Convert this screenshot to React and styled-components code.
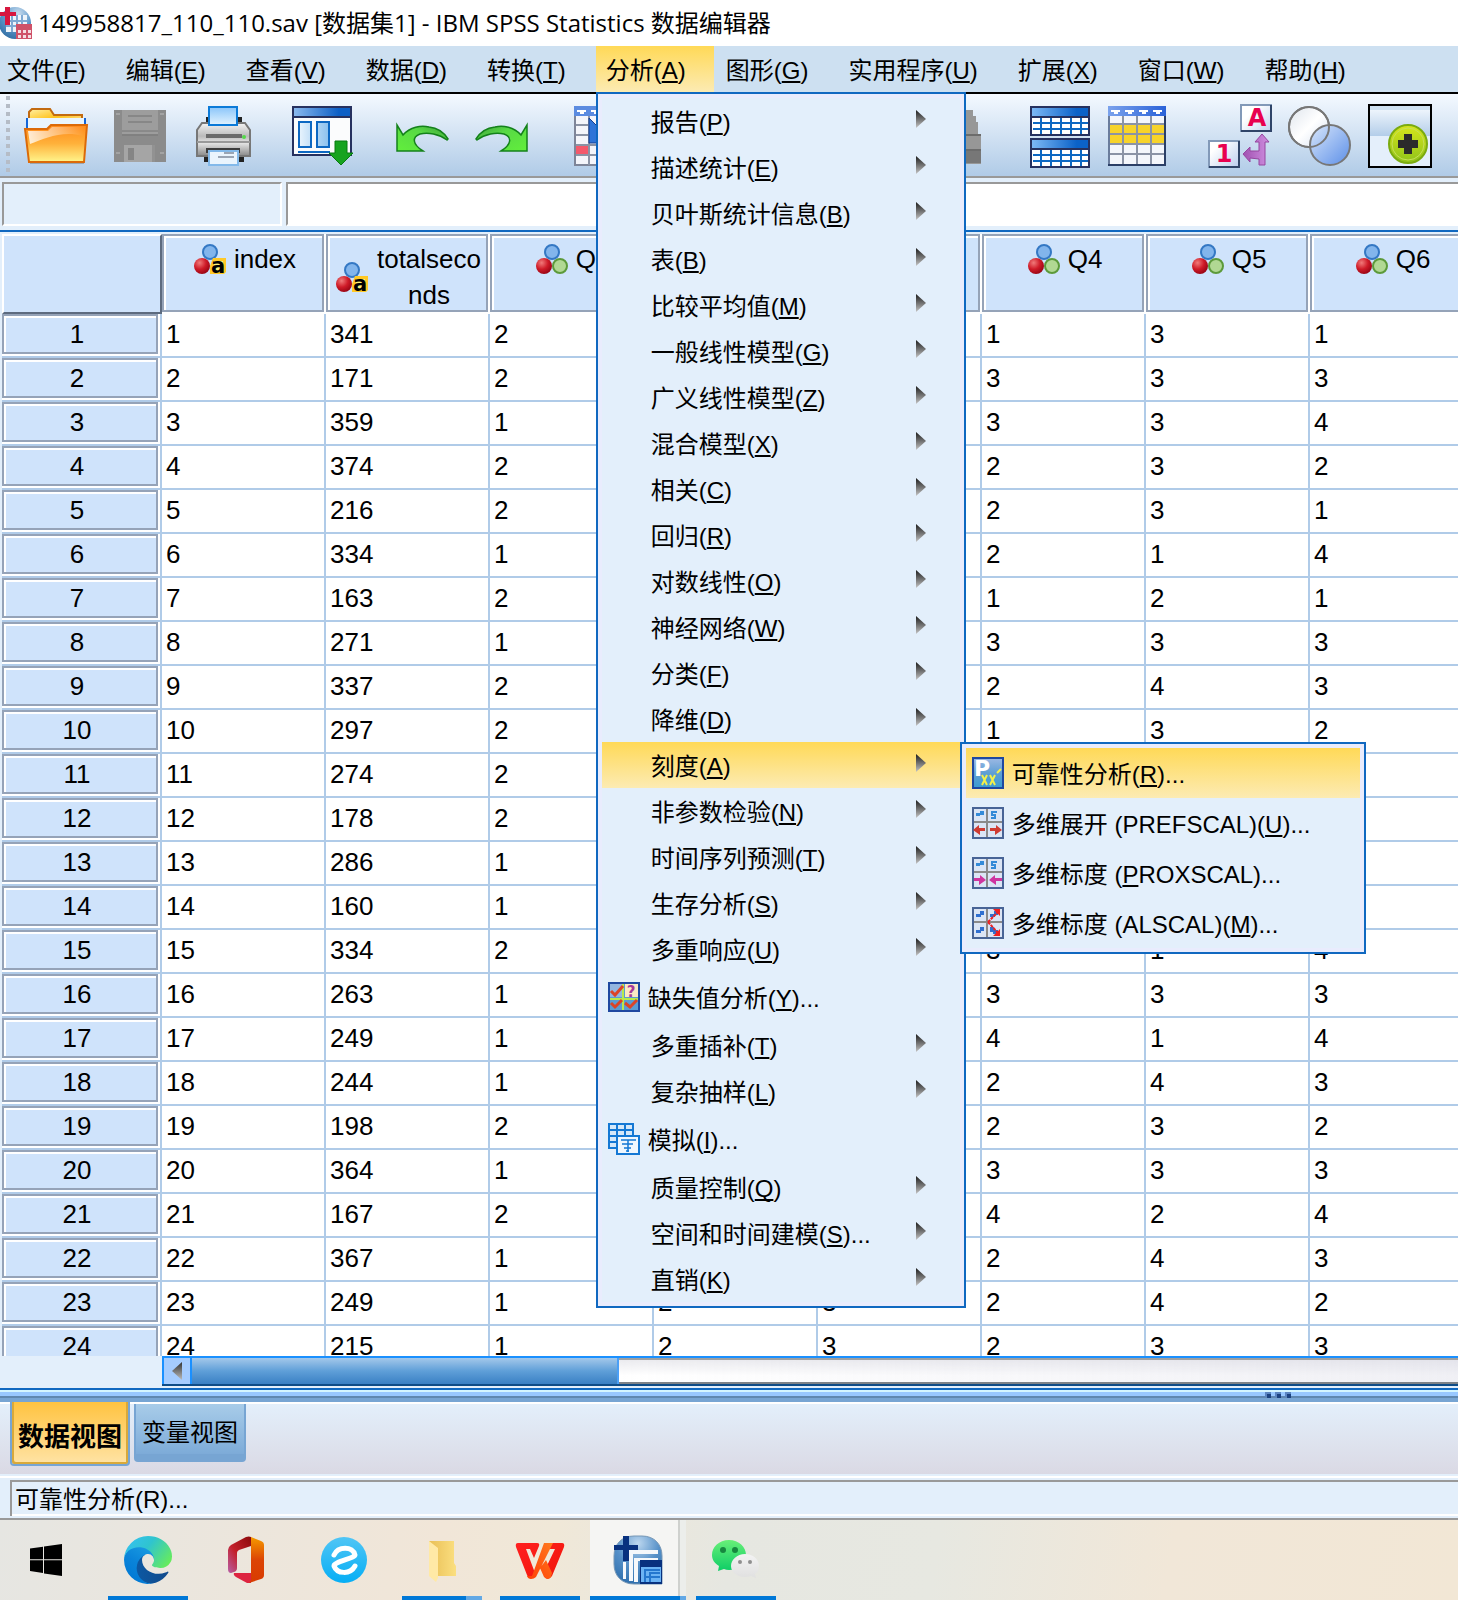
import { useState } from 'react';
import styled, { createGlobalStyle, css } from 'styled-components';

const sans = '"Liberation Sans", "Noto Sans CJK SC", sans-serif';

const GlobalStyle = createGlobalStyle`
    * { box-sizing: border-box; }
    body { margin: 0; background: #e3effb; font-family: ${sans}; color: #000; }
    button, input { font: inherit; color: inherit; }
    button { border: 0; padding: 0; background: none; text-align: left; }
    ul { list-style: none; margin: 0; padding: 0; }
    svg { display: block; flex: none; overflow: visible; }
    u { text-decoration-thickness: 2px; text-underline-offset: 2px; text-decoration-skip-ink: none; }
`

const menus = [
    ['文件', 'F'], ['编辑', 'E'], ['查看', 'V'], ['数据', 'D'], ['转换', 'T'], ['分析', 'A'],
    ['图形', 'G'], ['实用程序', 'U'], ['扩展', 'X'], ['窗口', 'W'], ['帮助', 'H']
];

const scaleItems = [
    { icon: <ReliabilityIcon />, label: '可靠性分析', letter: 'R', dots: true },
    { icon: <ScalingIcon type="unfold" />, label: '多维展开 (PREFSCAL)', letter: 'U', dots: true },
    { icon: <ScalingIcon type="prox" />, text: <>多维标度 (<u>P</u>ROXSCAL)...</> },
    { icon: <ScalingIcon type="alscal" />, label: '多维标度 (ALSCAL)', letter: 'M', dots: true }
];

const analyzeItems = [
    { label: '报告', letter: 'P', more: true },
    { label: '描述统计', letter: 'E', more: true },
    { label: '贝叶斯统计信息', letter: 'B', more: true },
    { label: '表', letter: 'B', more: true },
    { label: '比较平均值', letter: 'M', more: true },
    { label: '一般线性模型', letter: 'G', more: true },
    { label: '广义线性模型', letter: 'Z', more: true },
    { label: '混合模型', letter: 'X', more: true },
    { label: '相关', letter: 'C', more: true },
    { label: '回归', letter: 'R', more: true },
    { label: '对数线性', letter: 'O', more: true },
    { label: '神经网络', letter: 'W', more: true },
    { label: '分类', letter: 'F', more: true },
    { label: '降维', letter: 'D', more: true },
    { label: '刻度', letter: 'A', more: true, items: scaleItems },
    { label: '非参数检验', letter: 'N', more: true },
    { label: '时间序列预测', letter: 'T', more: true },
    { label: '生存分析', letter: 'S', more: true },
    { label: '多重响应', letter: 'U', more: true },
    { icon: <MissingIcon />, label: '缺失值分析', letter: 'Y', dots: true },
    { label: '多重插补', letter: 'T', more: true },
    { label: '复杂抽样', letter: 'L', more: true },
    { icon: <SimulationIcon />, label: '模拟', letter: 'I', dots: true },
    { label: '质量控制', letter: 'Q', more: true },
    { label: '空间和时间建模', letter: 'S', dots: true, more: true },
    { label: '直销', letter: 'K', more: true }
];

const columns = ['index', 'totalseconds', 'Q1', 'Q2', 'Q3', 'Q4', 'Q5', 'Q6'];

// totalseconds, Q1 ... Q6
const rows = [
    [341, 2, '', '', 1, 3, 1],
    [171, 2, '', '', 3, 3, 3],
    [359, 1, '', '', 3, 3, 4],
    [374, 2, '', '', 2, 3, 2],
    [216, 2, '', '', 2, 3, 1],
    [334, 1, '', '', 2, 1, 4],
    [163, 2, '', '', 1, 2, 1],
    [271, 1, '', '', 3, 3, 3],
    [337, 2, '', '', 2, 4, 3],
    [297, 2, '', '', 1, 3, 2],
    [274, 2, '', '', '', '', ''],
    [178, 2, '', '', '', '', ''],
    [286, 1, '', '', '', '', ''],
    [160, 1, '', '', '', '', ''],
    [334, 2, '', '', 3, 1, 4],
    [263, 1, '', '', 3, 3, 3],
    [249, 1, '', '', 4, 1, 4],
    [244, 1, '', '', 2, 4, 3],
    [198, 2, '', '', 2, 3, 2],
    [364, 1, '', '', 3, 3, 3],
    [167, 2, '', '', 4, 2, 4],
    [367, 1, '', '', 2, 4, 3],
    [249, 1, 2, 3, 2, 4, 2],
    [215, 1, 2, 3, 2, 3, 3]
];

function App(){
    const [open, setOpen] = useState('分析');
    const [view, setView] = useState('data');

    return(
        <Window>
            <GlobalStyle />
            <TitleBar>
                <AppIcon />
                <Title>149958817_110_110.sav [数据集1] - IBM SPSS Statistics 数据编辑器</Title>
            </TitleBar>
            <MenuBar>
                {menus.map(([label, letter]) => (
                    <MenuEntry key={label}>
                        <MenuButton type="button" $active={open === label} onClick={() => setOpen(label)}>
                            <span>{label}(<u>{letter}</u>)</span>
                        </MenuButton>
                        {label === '分析' && open === label && <Menu items={analyzeItems} />}
                    </MenuEntry>
                ))}
            </MenuBar>
            <Toolbar />
            <CellBar>
                <CellName type="text" aria-label="单元格" readOnly />
                <CellValue type="text" aria-label="值" />
            </CellBar>
            <DataGrid />
            <ScrollBar />
            <Splitter><SplitDots /></Splitter>
            <Tabs>
                <Tab type="button" $active={view === 'data'} onClick={() => setView('data')}>数据视图</Tab>
                <Tab type="button" $active={view === 'variable'} onClick={() => setView('variable')}>变量视图</Tab>
            </Tabs>
            <StatusBar><StatusText>可靠性分析(R)...</StatusText></StatusBar>
            <TaskBar />
        </Window>
    )
}

function Menu({ items, sub }){
    return(
        <Popup $sub={sub}>
            {items.map((item, i) => (
                <MenuRow key={i}>
                    <MenuItem type="button" $icon={!!item.icon} $active={!!item.items || (sub && i === 0)}>
                        {item.icon}
                        <MenuText>
                            {item.text || <>{item.label}(<u>{item.letter}</u>){item.dots && '...'}</>}
                        </MenuText>
                        {item.more && <MoreArrow />}
                    </MenuItem>
                    {item.items && <Menu items={item.items} sub />}
                </MenuRow>
            ))}
        </Popup>
    )
}

function DataGrid(){
    return(
        <GridArea>
            <Table>
                <colgroup>
                    <NumberCol />
                    {columns.map(name => <DataCol key={name} />)}
                </colgroup>
                <thead>
                    <tr>
                        <HeadCell><Corner /></HeadCell>
                        {columns.map((name, i) => (
                            <HeadCell key={name} scope="col">
                                <HeadBox>
                                    <HeadLabel>
                                        <NominalIcon string={i < 2} />
                                        <HeadName>{name}</HeadName>
                                    </HeadLabel>
                                </HeadBox>
                            </HeadCell>
                        ))}
                    </tr>
                </thead>
                <tbody>
                    {rows.map((row, i) => (
                        <tr key={i}>
                            <NumberCell scope="row"><NumberBox>{i + 1}</NumberBox></NumberCell>
                            <Cell>{i + 1}</Cell>
                            {row.map((value, j) => <Cell key={j}>{value}</Cell>)}
                        </tr>
                    ))}
                </tbody>
            </Table>
        </GridArea>
    )
}

function ScrollBar(){
    return(
        <ScrollRow>
            <ScrollTrack>
                <ScrollButton type="button" aria-label="向左滚动">
                    <svg width="10" height="18" viewBox="0 0 10 18">
                        <defs>
                            <linearGradient id="sl" x1="0" y1="0" x2="0" y2="1"><stop stopColor="#333" /><stop offset="1" stopColor="#bbb" /></linearGradient>
                        </defs>
                        <path d="M10 0v18L0 9z" fill="url(#sl)" />
                    </svg>
                </ScrollButton>
                <ScrollThumb />
                <ScrollRest />
            </ScrollTrack>
        </ScrollRow>
    )
}

function Toolbar(){
    return(
        <Tools>
            <Grip />
            <ToolGroup $gap={20} $before={14}>
                <Tool type="button" aria-label="打开"><FolderIcon /></Tool>
                <Tool type="button" aria-label="保存"><SaveIcon /></Tool>
                <Tool type="button" aria-label="打印"><PrintIcon /></Tool>
            </ToolGroup>
            <ToolGroup $before={34}>
                <Tool type="button" aria-label="重新调用对话框"><RecallIcon /></Tool>
            </ToolGroup>
            <ToolGroup $gap={16} $before={36}>
                <Tool type="button" aria-label="撤消"><UndoIcon /></Tool>
                <Tool type="button" aria-label="重做"><UndoIcon flip /></Tool>
            </ToolGroup>
            <ToolGroup $gap={16} $before={38}>
                <Tool type="button" aria-label="转到个案"><CaseIcon /></Tool>
                <Tool type="button" aria-label="转到变量"><CaseIcon /></Tool>
                <Tool type="button" aria-label="变量"><CaseIcon /></Tool>
                <Tool type="button" aria-label="描述统计"><CaseIcon /></Tool>
            </ToolGroup>
            <ToolGroup $before={46}>
                <Tool type="button" aria-label="查找"><FindIcon /></Tool>
            </ToolGroup>
            <ToolGroup $gap={14} $before={42}>
                <Tool type="button" aria-label="拆分文件"><SplitIcon /></Tool>
                <Tool type="button" aria-label="选择个案"><SelectIcon /></Tool>
            </ToolGroup>
            <ToolGroup $gap={16} $before={38}>
                <Tool type="button" aria-label="值标签"><LabelsIcon /></Tool>
                <Tool type="button" aria-label="使用变量集"><SetsIcon /></Tool>
                <Tool type="button" aria-label="定制工具栏"><CustomIcon /></Tool>
            </ToolGroup>
        </Tools>
    )
}

function TaskBar(){
    return(
        <Tasks>
            <StartButton type="button" aria-label="开始"><WindowsIcon /></StartButton>
            <Task icon={<EdgeIcon />} name="Edge" running />
            <Task icon={<OfficeIcon />} name="Office" />
            <Task icon={<BrowserIcon />} name="浏览器" />
            <Task icon={<ExplorerIcon />} name="文件资源管理器" running stacked={16} />
            <Task icon={<WpsIcon />} name="WPS" running />
            <Task icon={<SpssIcon />} name="SPSS" running stacked={6} active />
            <Task icon={<WeChatIcon />} name="微信" running />
        </Tasks>
    )
}

function Task({ icon, name, running, stacked = 0, active }){
    return(
        <TaskButton type="button" aria-label={name} $active={active}>
            <TaskFace $active={active}>{icon}</TaskFace>
            <TaskLine $running={running} $stacked={stacked} />
        </TaskButton>
    )
}

/* icons */

function AppIcon(){
    return(
        <svg width="32" height="32" viewBox="0 0 32 32">
            <defs>
                <radialGradient id="ai" cx=".6" cy=".2" r=".9"><stop stopColor="#c9dcee" /><stop offset=".5" stopColor="#5e98ca" /><stop offset="1" stopColor="#2b689f" /></radialGradient>
            </defs>
            <circle cx="15" cy="16" r="16" fill="url(#ai)" />
            <path d="M6 8h21v17H6z" fill="#eef4fa" />
            <path d="M6 14h21M6 19h21M12 8v17M17 8v17M22 8v17" stroke="#7fa9d3" strokeWidth="2" />
            <path d="M16 17h16v15H16z" fill="#cf5269" />
            <path d="M18 23h3v3h-3zM23 23h3v3h-3zM28 23h3v3h-3zM18 28h3v3h-3zM23 28h3v3h-3zM28 28h3v3h-3z" fill="#f4dde2" />
            <path d="M5 0h5v5h6v4h-6v9H5V9H0V5h5z" fill="#d7173f" />
        </svg>
    )
}

function MoreArrow(){
    return(
        <svg width="10" height="22" viewBox="0 0 10 22">
            <defs>
                <linearGradient id="ma" x1="0" y1="0" x2="0" y2="1"><stop stopColor="#1c1c1c" /><stop offset="1" stopColor="#c4c4c4" /></linearGradient>
            </defs>
            <path d="M0 0l10 9L0 18z" fill="url(#ma)" />
        </svg>
    )
}

function NominalIcon({ string }){
    return(
        <svg width="32" height="30" viewBox="0 0 32 30">
            <defs>
                <radialGradient id="nr" cx=".35" cy=".3" r=".8"><stop stopColor="#f07a7a" /><stop offset=".5" stopColor="#cf1b28" /><stop offset="1" stopColor="#8d0010" /></radialGradient>
            </defs>
            <circle cx="16" cy="8" r="7" fill="#82b5ec" stroke="#3478c4" strokeWidth="2" />
            <circle cx="8" cy="22" r="8" fill="url(#nr)" />
            {string
                ? <>
                    <path d="M19 14h13v14l-2 2H16v-8z" fill="#ffc926" />
                    <path d="M20 17h9v11h-9z" fill="#fff27a" />
                    <text x="24" y="29" textAnchor="middle" fontFamily="DejaVu Sans" fontWeight="700" fontSize="21">a</text>
                </>
                : <circle cx="24" cy="22" r="7" fill="#b1d893" stroke="#5c9a3a" strokeWidth="2" />}
        </svg>
    )
}

function FolderIcon(){
    return(
        <svg width="64" height="64" viewBox="0 0 64 64">
            <defs>
                <linearGradient id="fo1" x1="0" y1="0" x2="1" y2="1"><stop stopColor="#fff1a6" /><stop offset=".5" stopColor="#ffc21b" /><stop offset="1" stopColor="#ffe9b0" /></linearGradient>
                <linearGradient id="fo2" x1="0" y1="0" x2="0" y2="1"><stop stopColor="#ff8a1c" /><stop offset=".5" stopColor="#ffb13a" /><stop offset="1" stopColor="#fff58c" /></linearGradient>
                <linearGradient id="fo3" x1="0" y1="0" x2="1" y2="0"><stop stopColor="#fff" stopOpacity=".8" /><stop offset="1" stopColor="#fff" stopOpacity="0" /></linearGradient>
            </defs>
            <path d="M6 59h54v1H6z" fill="#777" opacity=".5" />
            <path d="M5 17V8l3-3h18l4 6h28v10H5z" fill="url(#fo1)" stroke="#c26a10" strokeWidth="2" />
            <path d="M3 14h58v14H3z" fill="#eaf5fd" />
            <path d="M3 14v12M61 14v10" stroke="#1465d8" strokeWidth="2" />
            <path d="M1 25h22l4-4h36l-3 37H5z" fill="url(#fo2)" stroke="#dc6a08" strokeWidth="2" />
            <path d="M4 27h20l4-4h32l-1 9C40 26 20 34 6 40z" fill="url(#fo3)" />
        </svg>
    )
}

function SaveIcon(){
    return(
        <svg width="64" height="64" viewBox="0 0 64 64">
            <path d="M6 6h52v52H6z" fill="#8b8b8b" />
            <path d="M14 6h36v24H14z" fill="#9d9d9d" />
            <path d="M20 12h24M20 18h24" stroke="#878787" strokeWidth="2" />
            <path d="M14 27h36M14 31h36" stroke="#777" strokeWidth="1" />
            <path d="M16 41h31v17H16z" fill="#a5a5a5" />
            <path d="M20 44h6v12h-6z" fill="#858585" />
            <path d="M44 41h3v17h-3z" fill="#929292" />
            <path d="M8 10h4M52 10h4M8 49h4M52 49h4" stroke="#a3a3a3" strokeWidth="2" />
        </svg>
    )
}

function PrintIcon(){
    return(
        <svg width="64" height="64" viewBox="0 0 64 64">
            <defs>
                <linearGradient id="pr1" x1="0" y1="0" x2="0" y2="1"><stop stopColor="#8ac5fa" /><stop offset="1" stopColor="#e2f3fe" /></linearGradient>
                <linearGradient id="pr2" x1="0" y1="0" x2="0" y2="1"><stop stopColor="#f4f4f4" /><stop offset=".4" stopColor="#bababa" /><stop offset=".6" stopColor="#e6e6e6" /><stop offset="1" stopColor="#888" /></linearGradient>
            </defs>
            <path d="M14 13h36v10H14zM12 52h40v6H12z" fill="#222" />
            <path d="M5 26l5-7h43l5 7v26H5z" fill="url(#pr2)" stroke="#777" strokeWidth="2" />
            <path d="M17 3h28v18H17z" fill="url(#pr1)" stroke="#0b7ad8" strokeWidth="2" />
            <path d="M14 30h36v4H14z" fill="#6a6a6a" />
            <path d="M5 38h53" stroke="#999" strokeWidth="2" />
            <circle cx="52" cy="33" r="2" fill="#54d84a" />
            <path d="M14 44h34v5H14z" fill="#3d3d3d" />
            <path d="M17 47h29v14H17z" fill="#eaf4fd" stroke="#83b9ea" strokeWidth="2" />
            <path d="M32 49h10M26 53h16" stroke="#9aa5b4" strokeWidth="2" />
        </svg>
    )
}

function RecallIcon(){
    return(
        <svg width="64" height="64" viewBox="0 0 64 64">
            <defs>
                <linearGradient id="re1" x1="0" x2="1"><stop stopColor="#8ab9ee" /><stop offset=".8" stopColor="#0c5fc6" /></linearGradient>
                <linearGradient id="re2" x1="0" x2="1"><stop stopColor="#e9f4fd" /><stop offset="1" stopColor="#8bc1ee" /></linearGradient>
            </defs>
            <path d="M3 3h58v48H3z" fill="#fbfcfd" stroke="#26315f" strokeWidth="2" />
            <path d="M4 4h56v9H4z" fill="url(#re1)" />
            <path d="M4 13h56" stroke="#26315f" strokeWidth="2" />
            <path d="M9 18h12v25H9zM27 18h12v25H27z" fill="url(#re2)" stroke="#0d68c2" strokeWidth="2" />
            <path d="M8 48h32" stroke="#0d68c2" strokeWidth="2" />
            <path d="M45 37h12v12h6L51 61 39 49h6z" fill="#17a31f" stroke="#087a10" />
        </svg>
    )
}

function UndoIcon({ flip }){
    return(
        <svg width="64" height="64" viewBox="0 0 64 64">
            <defs>
                <linearGradient id="un" x1="0" y1="1" x2="1" y2="0"><stop stopColor="#62ef3c" /><stop offset=".6" stopColor="#58d945" /><stop offset="1" stopColor="#3c9a3a" /></linearGradient>
            </defs>
            <path
                d="M7 21l6 10c7-8 18-10 26-8 10 1 16 7 19 12l-1 1c-8-6-19-8-27-6-8 3-8 10 3 17H7z"
                transform={flip ? 'translate(64 0) scale(-1 1)' : undefined}
                fill="url(#un)" stroke="#14811b" strokeWidth="1.5"
            />
        </svg>
    )
}

function CaseIcon(){
    return(
        <svg width="64" height="64" viewBox="0 0 64 64">
            <path d="M3 3h58v58H3z" fill="#f4f5fa" stroke="#7e8598" strokeWidth="2" />
            <path d="M2 2h60v10H2z" fill="#5b8be0" />
            <path d="M5 6h9v2h-2v2H8V8H5zM19 6h9v2h-2v2h-4V8h-3zM33 6h9v2h-2v2h-4V8h-3z" fill="#fff" />
            <path d="M4 21h56M4 31h56M4 41h56M4 51h56M17 12v49M31 12v49M45 12v49" stroke="#8b93a5" strokeWidth="2" />
            <path d="M4 42h12v8H4z" fill="#f4596b" />
            <path d="M17 14l10 10h14v15H17z" fill="#2f74d8" stroke="#173f8e" />
        </svg>
    )
}

function FindIcon(){
    return(
        <svg width="64" height="64" viewBox="0 0 64 64">
            <path d="M12 6h12v6h2v48H4V32l4-18zM38 6h13v6h3v6h2v14h3v28H38z" fill="#979797" />
            <path d="M24 24h16v16H24z" fill="#7a7a7a" />
            <path d="M38 31h21M4 31h20M4 46h20M38 46h21" stroke="#6c6c6c" strokeWidth="2" />
            <path d="M38 47h21v12H38z" fill="#777" />
        </svg>
    )
}

function SplitIcon(){
    return(
        <svg width="64" height="64" viewBox="0 0 64 64">
            <defs>
                <linearGradient id="sp" x1="0" x2="1"><stop stopColor="#7cb8f5" /><stop offset=".8" stopColor="#0b62c8" /></linearGradient>
            </defs>
            {[3, 35].map(y => (
                <g key={y}>
                    <path d={`M3 ${y}h58v28H3z`} fill="#fff" stroke="#26315f" strokeWidth="2" />
                    <path d={`M4 ${y + 1}h56v8H4z`} fill="url(#sp)" />
                    <path d={`M3 ${y + 10}h58`} stroke="#26315f" strokeWidth="2" />
                    <path d={`M5 ${y + 16}h55M5 ${y + 22}h55M13 ${y + 11}v16M23 ${y + 11}v16M33 ${y + 11}v16M43 ${y + 11}v16M53 ${y + 11}v16`} stroke="#0d68c2" strokeWidth="2" />
                </g>
            ))}
        </svg>
    )
}

function SelectIcon(){
    return(
        <svg width="64" height="64" viewBox="0 0 64 64">
            <defs>
                <linearGradient id="se" x1="0" x2="1"><stop stopColor="#7ba2ec" /><stop offset="1" stopColor="#2a62d8" /></linearGradient>
            </defs>
            <path d="M3 3h56v58H3z" fill="#f4f6fb" stroke="#6a7c9c" strokeWidth="2" />
            <path d="M2 2h58v10H2z" fill="url(#se)" />
            <path d="M5 6h9v2h-2v2H8V8H5zM19 6h9v2h-2v2h-4V8h-3zM33 6h9v2h-2v2h-4V8h-3zM47 6h9v2h-2v2h-4V8h-3z" fill="#fff" />
            <path d="M4 21h54v19H4z" fill="#f7d32a" />
            <path d="M4 20h54M4 30h54M4 40h54M4 50h54M17 12v48M31 12v48M45 12v48" stroke="#8b93a5" strokeWidth="2" />
            <path d="M2 61h57V12" fill="none" stroke="#2b3f66" strokeWidth="2" />
        </svg>
    )
}

function LabelsIcon(){
    return(
        <svg width="64" height="64" viewBox="0 0 64 64">
            <defs>
                <linearGradient id="lb" x1="0" y1="0" x2="1" y2="1"><stop offset=".4" stopColor="#fff" /><stop offset="1" stopColor="#86a8e0" /></linearGradient>
                <linearGradient id="lp" x1="0" x2="1"><stop stopColor="#a050b0" /><stop offset="1" stopColor="#cf8fe0" /></linearGradient>
            </defs>
            <path d="M33 1h30v26H33zM1 37h30v26H1z" fill="url(#lb)" stroke="#8299b8" strokeWidth="2" />
            <path d="M33 27h30V1M1 63h30V37" fill="none" stroke="#2f4468" strokeWidth="2" />
            <text x="49" y="22" textAnchor="middle" fontFamily="DejaVu Sans" fontWeight="700" fontSize="24" fill="#e8004f">A</text>
            <text x="16" y="58" textAnchor="middle" fontFamily="DejaVu Sans" fontWeight="700" fontSize="24" fill="#e8004f">1</text>
            <path d="M51 61V55l-9-1v4l-7-8 7-7v4h9V38h-4l7-8 7 8h-4v23z" fill="url(#lp)" stroke="#96469f" />
        </svg>
    )
}

function SetsIcon(){
    return(
        <svg width="64" height="64" viewBox="0 0 64 64">
            <defs>
                <linearGradient id="s1" x1="0" y1="0" x2="1" y2="1"><stop stopColor="#dfe5ed" /><stop offset=".5" stopColor="#fff" /><stop offset="1" stopColor="#d5e0f0" /></linearGradient>
                <linearGradient id="s2" x1="0" y1="0" x2="1" y2="1"><stop stopColor="#d9e7fb" /><stop offset="1" stopColor="#5c8fe8" /></linearGradient>
            </defs>
            <circle cx="21" cy="23" r="20" fill="url(#s1)" stroke="#777" strokeWidth="2" />
            <circle cx="42" cy="41" r="20" fill="url(#s2)" stroke="#777" strokeWidth="2" />
            <circle cx="21" cy="23" r="20" fill="none" stroke="#777" strokeWidth="2" />
        </svg>
    )
}

function CustomIcon(){
    return(
        <svg width="64" height="64" viewBox="0 0 64 64">
            <defs>
                <linearGradient id="cu" x1="0" y1="0" x2="0" y2="1"><stop stopColor="#edf4fc" /><stop offset="1" stopColor="#b3cde9" /></linearGradient>
                <linearGradient id="cg" x1="0" y1="0" x2="0" y2="1"><stop stopColor="#d7e51c" /><stop offset="1" stopColor="#8fc31a" /></linearGradient>
            </defs>
            <path d="M1 1h62v62H1z" fill="#e4effb" stroke="#000" strokeWidth="2" />
            <path d="M2 2h60v4H2z" fill="#cde0f1" />
            <path d="M2 6h60v26H2z" fill="url(#cu)" />
            <circle cx="40" cy="40" r="19" fill="url(#cg)" stroke="#7bab10" strokeWidth="2" />
            <circle cx="40" cy="40" r="16" fill="none" stroke="#c7e05a" />
            <path d="M36 30h8v6h6v8h-6v6h-8v-6h-6v-8h6z" fill="#2b2b2b" />
        </svg>
    )
}

function ReliabilityIcon(){
    return(
        <svg width="32" height="32" viewBox="0 0 32 32">
            <defs>
                <linearGradient id="rl" x1="0" y1="0" x2="0" y2="1"><stop stopColor="#9db9e4" /><stop offset=".5" stopColor="#5f9fd4" /><stop offset="1" stopColor="#3a9dd0" /></linearGradient>
            </defs>
            <path d="M1 1h30v30H1z" fill="url(#rl)" stroke="#1f48a0" strokeWidth="2" />
            <text x="2" y="19" fontFamily="DejaVu Sans" fontWeight="700" fontSize="22" fill="#fff">P</text>
            <path d="M10 18l5 10M15 18l-5 10M18 18l5 10M23 18l-5 10M25 16l4-4" stroke="#f3f04a" strokeWidth="2" />
        </svg>
    )
}

function ScalingIcon({ type }){
    const als = type === 'alscal';
    return(
        <svg width="32" height="32" viewBox="0 0 32 32">
            <path d="M1 1h30v30H1z" fill="#dbe5f5" stroke="#486496" strokeWidth="2" />
            <path d="M2 15h28M15 2v28" stroke="#8a8a8a" strokeWidth="2" />
            {als
                ? <>
                    <path d="M4 7h4V4h4v4H9v2H4zM4 23h4v-3h4v4H9v2H4zM18 7h4V4h4v4h-3v2h-5zM18 20h4v3h4v4h-5v-2h-3z" fill="#2f6fd0" />
                    <path d="M16 15L27 4M16 15l11 12" stroke="#f02020" strokeWidth="2" strokeDasharray="3 1" />
                    <path d="M21 2h7v7zM21 29h7v-7z" fill="#f02020" />
                </>
                : <path d="M4 6h4V4h4v4H8v1H4zM19 4h6v2h-4v1h3v5h-5v-2h3V9h-3z" fill="#348ad8" />}
            {type === 'unfold' && <path d="M1 23l6-5v3h6v3H8v4zM30 23l-6-5v3h-6v3h5v4z" fill="#cf3b32" />}
            {type === 'prox' && <path d="M14 23l-6-5v3H2v3h5v4zM17 23l6-5v3h7v3h-6v4z" fill="#cf35a0" />}
        </svg>
    )
}

function MissingIcon(){
    return(
        <svg width="32" height="30" viewBox="0 0 32 30">
            <path d="M1 1h30v28H1z" fill="#5b9cd3" />
            <path d="M1 1h14v14H1z" fill="#93b5df" />
            <path d="M17 2h13v13H17z" fill="#fbe8c4" />
            <path d="M2 17h28M15 2v26" stroke="#b8ea4c" strokeWidth="2" />
            <path d="M3 9l4 4 8-9M3 21l4 4 7-7M17 21l5 4 7-7" fill="none" stroke="#dc4427" strokeWidth="3" />
            <text x="23" y="15" textAnchor="middle" fontFamily="DejaVu Sans" fontWeight="700" fontSize="15" fill="#a8389a">?</text>
            <path d="M1 1h30v28H1z" fill="none" stroke="#1f48a0" strokeWidth="2" />
        </svg>
    )
}

function SimulationIcon(){
    return(
        <svg width="32" height="32" viewBox="0 0 32 32">
            <path d="M1 1h24v24H1z" fill="#d5e8f9" stroke="#1478d4" strokeWidth="2" />
            <path d="M1 7h24M1 13h24M1 19h24M9 1v24M17 1v24" stroke="#1478d4" strokeWidth="2" />
            <path d="M9 13h22v18H9z" fill="#eff7fe" stroke="#1478d4" strokeWidth="2" />
            <path d="M13 17h15M20 17v12M14 21h11M16 25h7M18 28h3" stroke="#1478d4" strokeWidth="1.5" />
        </svg>
    )
}

function SplitDots(){
    return(
        <svg width="28" height="8" viewBox="0 0 28 8">
            <path d="M1 2h6v5H1zM11 2h6v5h-6zM21 2h6v5h-6z" fill="#5b86c2" />
            <path d="M3 4h4v4H3zM13 4h4v4h-4zM23 4h4v4h-4z" fill="#1c4380" />
        </svg>
    )
}

function WindowsIcon(){
    return(
        <svg width="32" height="32" viewBox="0 0 32 32">
            <path d="M0 4.500l13-1.800v12.500H0zM14 2.500L32 0v15.200H14zM0 16.300h13v12.600L0 27zM14 16.300h18V32l-18-2.600z" />
        </svg>
    )
}

function EdgeIcon(){
    return(
        <svg width="48" height="48" viewBox="0 0 256 256">
            <defs>
                <linearGradient id="e1" x1="0" x2="1"><stop stopColor="#0c59a4" /><stop offset="1" stopColor="#114a8b" /></linearGradient>
                <linearGradient id="e2" x1=".8" y1="0" x2=".3" y2="1"><stop stopColor="#1b9de2" /><stop offset=".5" stopColor="#0a84d9" /><stop offset="1" stopColor="#0078d4" /></linearGradient>
                <linearGradient id="e3" x1="0" y1=".2" x2="1" y2=".7"><stop stopColor="#35c1f1" /><stop offset=".45" stopColor="#2fc4cf" /><stop offset="1" stopColor="#66eb5e" /></linearGradient>
            </defs>
            <g transform="translate(-4.600 -4.900)">
                <path fill="url(#e1)" d="M235.680 195.460a93.730 93.730 0 01-10.540 4.710 101.870 101.870 0 01-35.900 6.460c-47.320 0-88.540-32.550-88.540-74.320A31.480 31.480 0 01117.130 105c-42.800 1.800-53.800 46.400-53.800 72.530 0 73.880 68.090 81.370 82.760 81.370 7.910 0 19.840-2.300 27-4.560l1.310-.440a128.340 128.340 0 0066.600-52.800 4 4 0 00-5.320-5.640z" />
                <path fill="url(#e2)" d="M110.340 246.340A79.200 79.200 0 0187.600 225a80.720 80.720 0 0129.530-120c3.120-1.470 8.450-4.130 15.540-4a32.350 32.350 0 0125.690 13 31.880 31.880 0 016.360 18.660c0-.210 24.460-79.600-80-79.600-43.900 0-80 41.660-80 78.210a130.150 130.150 0 0012.110 56 128 128 0 00156.380 67.110 75.550 75.550 0 01-62.780-8z" />
                <path fill="url(#e3)" d="M156.940 153.780c-.810 1.050-3.300 2.500-3.300 5.660 0 2.610 1.700 5.120 4.720 7.230 14.380 10 41.490 8.680 41.560 8.680a59.560 59.560 0 0030.270-8.350 61.380 61.380 0 0030.430-52.880c.260-22.410-8-37.310-11.340-43.910C228.090 28.760 182.350 4.920 132.610 4.920a128 128 0 00-128 126.200c.480-36.540 36.800-66.050 80-66.050 3.500 0 23.460.340 42 10.070 16.340 8.580 24.900 18.940 30.850 29.210 6.180 10.670 7.280 24.150 7.280 29.520s-2.740 13.330-7.800 19.910z" />
            </g>
        </svg>
    )
}

function OfficeIcon(){
    return(
        <svg width="48" height="48" viewBox="0 0 48 48">
            <defs>
                <linearGradient id="o1" x1="0" y1="0" x2="0" y2="1"><stop stopColor="#f59a00" /><stop offset=".5" stopColor="#dc4405" /><stop offset="1" stopColor="#d83b01" /></linearGradient>
                <linearGradient id="o2" x1="1" y1="0" x2="0" y2="1"><stop stopColor="#8c0a0c" /><stop offset=".55" stopColor="#c3202a" /><stop offset="1" stopColor="#b860a8" /></linearGradient>
            </defs>
            <path d="M12 37h17v10h-4l-11-6q-3-2-2-4z" fill="#dd2440" />
            <path d="M29 1l10 4q3 1 3 4v30q0 3-3 4l-12 4 2-3z" fill="url(#o1)" />
            <path d="M24 1q3-1 5 0v9l-12 4q-2 1-2 3v15q0 3-3 4l-3 1q-3 0-3-4V14q0-3 3-5z" fill="url(#o2)" />
        </svg>
    )
}

function BrowserIcon(){
    return(
        <svg width="48" height="48" viewBox="0 0 48 48">
            <defs>
                <linearGradient id="br" x1="0" y1="0" x2="0" y2="1"><stop stopColor="#50c5f5" /><stop offset="1" stopColor="#06aef5" /></linearGradient>
            </defs>
            <circle cx="24" cy="24" r="23" fill="url(#br)" />
            <path d="M14 19c4-9 19-9 21 0 0 3-22 7-21 11 3 8 16 9 21 0" fill="none" stroke="#fff" strokeWidth="5" strokeLinecap="round" strokeLinejoin="round" />
        </svg>
    )
}

function ExplorerIcon(){
    return(
        <svg width="48" height="48" viewBox="0 0 48 48">
            <defs>
                <linearGradient id="ex" x1="0" x2="1"><stop stopColor="#e9bf56" /><stop offset="1" stopColor="#fbdf80" /></linearGradient>
            </defs>
            <path d="M11 5h25v22l2 3v10H14z" fill="url(#ex)" />
            <path d="M11 5l9 7v30l-2 4-7-6z" fill="#ffe9a6" />
        </svg>
    )
}

function WpsIcon(){
    return(
        <svg width="48" height="48" viewBox="0 0 48 48">
            <defs>
                <linearGradient id="w1" x1="0" y1="0" x2="1" y2="1"><stop stopColor="#ff2020" /><stop offset="1" stopColor="#f01608" /></linearGradient>
                <linearGradient id="w2" x1="1" y1="0" x2="0" y2="1"><stop stopColor="#ff7a1e" /><stop offset="1" stopColor="#ff3d06" /></linearGradient>
            </defs>
            <path d="M2 7h19q3 0 2 3l-5 12-4-9h-4l9 24-4 5q-3 0-4-3L0 11q-1-4 2-4zM33 7h13q3 0 2 4L36 40q-2 3-5 3l-4-5 12-25h-8z" fill="url(#w1)" />
            <path d="M28 7h9L20 41q-2 2-5 2-3 0-4-3l5 0zM30 24l6 13-1 4q-3 4-7 0l-4-9z" fill="url(#w2)" />
        </svg>
    )
}

function SpssIcon(){
    return(
        <svg width="48" height="48" viewBox="0 0 48 48">
            <defs>
                <radialGradient id="ss" cx=".5" cy=".15" r=".9"><stop stopColor="#bcd7ef" /><stop offset=".5" stopColor="#5590c8" /><stop offset="1" stopColor="#2c6dab" /></radialGradient>
            </defs>
            <path d="M20 0h8c12 0 20 8 20 20v28H20C8 48 0 40 0 28v-8C0 8 8 0 20 0z" fill="url(#ss)" stroke="#7797b5" />
            <path d="M9 26h3v17H9zM15 14h29v4H19v27h-4zM20 22h24v3H24v21h-4z" fill="#f5f8fb" />
            <path d="M9 0h6v9h9v5h-9v11H9V14H0V9h9z" fill="#08317f" />
            <path d="M26 24h22v24H26z" fill="#08317f" />
            <path d="M27 31h20v15H27z" fill="#6bb3f4" />
            <path d="M31 46V34h15M36 46V37h10M31 41h15" fill="none" stroke="#2477cf" strokeWidth="2" />
        </svg>
    )
}

function WeChatIcon(){
    return(
        <svg width="48" height="48" viewBox="0 0 48 48">
            <defs>
                <linearGradient id="wc" x1="0" y1="0" x2="0" y2="1"><stop stopColor="#68ef78" /><stop offset="1" stopColor="#0dcd66" /></linearGradient>
                <linearGradient id="wg" x1="0" y1="0" x2="0" y2="1"><stop stopColor="#f3f3f3" /><stop offset="1" stopColor="#e0e0e0" /></linearGradient>
            </defs>
            <path d="M17 4c10 0 17 7 17 15S27 34 17 34q-3 0-5-1l-6 2 1-5C2 27 0 23 0 19 0 11 7 4 17 4z" fill="url(#wc)" />
            <path d="M33 18c8 0 14 5 14 12 0 3-1 6-4 8l1 4-5-2q-3 1-6 1c-8 0-14-5-14-11s6-12 14-12z" fill="url(#wg)" />
            <g fill="#16883f"><circle cx="11" cy="14" r="3" /><circle cx="23" cy="14" r="3" /></g>
            <g fill="#8f8f8f"><circle cx="28" cy="26" r="2" /><circle cx="38" cy="26" r="2" /></g>
        </svg>
    )
}

/* window */

const Window = styled.div`
    display: flex;
    flex-direction: column;
    height: 100vh;
    overflow: hidden;
    font-size: 24px;
`

const TitleBar = styled.header`
    display: flex;
    align-items: center;
    gap: 6px;
    flex: none;
    height: 46px;
    background: #fff;
`

const Title = styled.h1`
    margin: 0;
    font: 400 24px/36px "Open Sans", "Noto Sans CJK SC", sans-serif;
    white-space: nowrap;
`

const highlight = 'linear-gradient(#ffd957, #fcebb3)';

const MenuBar = styled.ul`
    display: flex;
    gap: 2px;
    flex: none;
    height: 48px;
    margin-left: -3px;
    background: #cde0f1;
    border-bottom: 2px solid #000;
`

const MenuEntry = styled.li`
    position: relative;
    z-index: 2;
`

const MenuButton = styled.button`
    height: 46px;
    padding: 4px 28px 0 10px;
    line-height: 42px;
    white-space: nowrap;
    background: ${p => p.$active ? highlight : 'none'};
`

const Popup = styled.ul`
    position: absolute;
    top: ${p => p.$sub ? '0' : '100%'};
    left: ${p => p.$sub ? '100%' : '0'};
    width: ${p => p.$sub ? 406 : 370}px;
    padding: 4px;
    border: 2px solid #1068c0;
    background: #e3effb;
    box-shadow: inset 0 0 0 4px #e9ecfd;
    z-index: 3;
`

const MenuRow = styled.li`
    position: relative;
`

const MenuItem = styled.button`
    display: flex;
    align-items: center;
    gap: 8px;
    width: 100%;
    height: ${p => p.$icon ? 50 : 46}px;
    padding: 0 34px 0 ${p => p.$icon ? 6 : 49}px;
    background: ${p => p.$active ? highlight : 'none'};
`

const MenuText = styled.span`
    flex: 1;
    padding-top: 4px;
    line-height: 36px;
    white-space: nowrap;
`

/* toolbar */

const Tools = styled.div`
    display: flex;
    flex: none;
    align-items: center;
    height: 84px;
    padding: 2px 0 0 6px;
    background: linear-gradient(#f4f9ff, #b0cbe7);
    border-bottom: 2px solid #999;
`

const Grip = styled.div`
    align-self: stretch;
    width: 4px;
    background: repeating-linear-gradient(#b5bcc6 0 4px, transparent 4px 8px);
`

const ToolGroup = styled.div`
    display: flex;
    flex: none;
    gap: ${p => p.$gap || 0}px;
    margin-left: ${p => p.$before}px;
`

const Tool = styled.button`
    width: 64px;
    height: 64px;
`

const CellBar = styled.div`
    display: flex;
    flex: none;
    gap: 4px;
    height: 54px;
    padding: 4px 0 4px 2px;
    border-bottom: 2px solid #1068c0;
`

const cellInput = css`
    border: 2px solid #fff;
    border-top-color: #999;
    border-left-color: #999;
    border-radius: 0;
    outline: 0;
`

const CellName = styled.input`
    ${cellInput}
    width: 280px;
    background: #e3effb;
`

const CellValue = styled.input`
    ${cellInput}
    flex: 1;
    min-width: 0;
    background: #fff;
    border-right: 0;
`

/* data grid */

const GridArea = styled.main`
    flex: 1;
    min-height: 0;
    padding: 2px 0 0 2px;
    overflow: hidden;
`

const Table = styled.table`
    table-layout: fixed;
    width: 100%;
    border-collapse: separate;
    border-spacing: 0;
    background: #fff;
    font-size: 26px;
    line-height: 36px;
`

const NumberCol = styled.col`
    width: 160px;
`

const DataCol = styled.col`
    width: 164px;
`

const HeadCell = styled.th`
    height: 80px;
    padding: 0 2px 2px 0;
    font-weight: 400;
`

const Corner = styled.div`
    height: 80px;
    margin: 0 -2px -2px 0;
    background: #cfe3fb;
    border: 2px solid #5d6b7f;
    border-top-color: #fff;
    border-left-color: #fff;
`

const HeadBox = styled.div`
    display: flex;
    justify-content: center;
    align-items: flex-start;
    height: 78px;
    padding: 5px 0 0 4px;
    background: #cfe3fb;
    border: 2px solid #95a3b8;
    box-shadow: inset 2px 2px #fff;
`

const HeadLabel = styled.div`
    display: flex;
    align-items: center;
    gap: 8px;
`

const HeadName = styled.span`
    max-width: 107px;
    word-break: break-all;
`

const NumberCell = styled.th`
    height: 44px;
    padding: 0 2px 2px 0;
    border-right: 2px solid #b0cbe8;
    border-bottom: 2px solid #b0cbe8;
    font-weight: 400;
`

const NumberBox = styled.div`
    height: 40px;
    padding-right: 6px;
    line-height: 36px;
    background: #cfe3fb;
    border: 2px solid #95a3b8;
    box-shadow: inset 2px 2px #fff;
`

const Cell = styled.td`
    height: 44px;
    padding: 2px 4px 0;
    vertical-align: top;
    border-right: 2px solid #b0cbe8;
    border-bottom: 2px solid #b0cbe8;
`

/* scroll bar and splitter */

const ScrollRow = styled.div`
    flex: none;
    padding: 0 0 2px 162px;
`

const ScrollTrack = styled.div`
    display: flex;
    height: 30px;
    border-top: 2px solid #1a90ff;
    border-bottom: 2px solid #0f4c87;
`

const ScrollButton = styled.button`
    display: flex;
    align-items: center;
    justify-content: center;
    width: 30px;
    background: #a5ccff;
    border: 0 solid #1a90ff;
    border-width: 0 2px;
`

const ScrollThumb = styled.div`
    flex: 336;
    background: linear-gradient(#a4c8ea, #5f9fd8 50%, #3a80c4);
    border-right: 2px solid #4b9ff5;
`

const ScrollRest = styled.div`
    flex: 664;
    background: linear-gradient(to right, #fff0, #d9d9e566), linear-gradient(#ebebef, #fff 70%);
    border-top: 2px solid #a0a0a0;
    border-bottom: 2px solid #7d8288;
`

const Splitter = styled.div`
    display: flex;
    flex: none;
    justify-content: flex-end;
    height: 14px;
    padding: 2px 166px 0 0;
    background: linear-gradient(#1068c0 2px, #d4f6ff 2px 4px, #98c8ff 4px 8px, #5f88b0 8px 10px, #77a5d3 10px);
`

/* view tabs and status */

const Tabs = styled.div`
    display: flex;
    align-items: flex-start;
    flex: none;
    gap: 4px;
    height: 72px;
    padding-left: 10px;
    background: linear-gradient(#fff 2px, #e3effb 2px, #dad9e4);
`

const Tab = styled.button`
    border: 2px solid #77a5d3;
    border-top: 0;
    border-radius: 0 0 4px 4px;
    white-space: nowrap;
    text-align: center;
    ${p => p.$active ? css`
        width: 120px;
        height: 64px;
        padding-top: 2px;
        font-size: 26px;
        font-weight: 700;
        background: linear-gradient(#ffc340, #ffe3a5);
        box-shadow: inset 2px -2px #d9a93a, inset -2px 0 #d9a93a;
    ` : css`
        width: 112px;
        height: 58px;
        margin-top: 2px;
        border-bottom-width: 8px;
        padding-top: 2px;
        background: linear-gradient(#a8cce9, #7dabd8);
    `}
`

const StatusBar = styled.footer`
    flex: none;
    padding: 6px 0 2px 10px;
    background: linear-gradient(#e3effb 2px, #fff 2px 4px, #e3effb 4px);
    border-bottom: 2px solid #999;
`

const StatusText = styled.div`
    height: 36px;
    padding-left: 3px;
    line-height: 36px;
    border: 0 solid #999;
    border-width: 2px 0 0 2px;
    box-shadow: inset 0 -2px #fff;
`

/* task bar */

const Tasks = styled.nav`
    display: flex;
    flex: none;
    height: 80px;
    background: linear-gradient(100deg, #e6e6e2, #f1e6d8 30%, #f0e8d8 38%, #e6e7e1 50%, #e7e8e1 64%, #f1e7d8 80%, #f2e7d5);
`

const StartButton = styled.button`
    display: flex;
    align-items: center;
    justify-content: center;
    width: 92px;
    margin-right: 7px;
`

const TaskButton = styled.button`
    display: flex;
    flex-direction: column;
    width: 98px;
    padding: 0 ${p => p.$active ? 1 : 9}px;
`

const TaskFace = styled.span`
    display: flex;
    flex: 1;
    align-items: center;
    justify-content: center;
    width: 100%;
    padding-top: 4px;
    ${p => p.$active && css`
        background: linear-gradient(to left, #eceeeb 6px, #cfd1ce 6px 8px, #f5f5f3 8px);
    `}
`

const TaskLine = styled.span`
    width: 100%;
    height: 4px;
    background: ${p => p.$running
        ? `linear-gradient(to left, #62a8e5 ${p.$stacked}px, #0078d7 ${p.$stacked}px)`
        : 'none'};
`

export default App;
